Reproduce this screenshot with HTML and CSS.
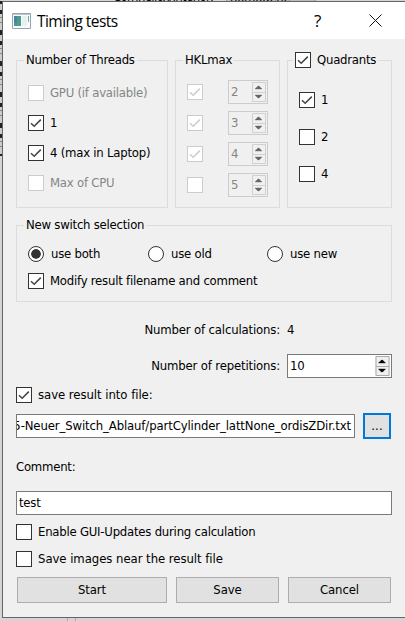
FILE: index.html
```html
<!DOCTYPE html>
<html lang="en">
<head>
<meta charset="utf-8">
<title>Timing tests</title>
<link rel="stylesheet" href="styles.css">
</head>
<body>
<svg class="symbols" width="0" height="0"><defs>
<symbol id="check" viewBox="0 0 14 14"><path d="M2 7.2 5.2 10.3 11.8 3.6" fill="none" stroke="currentColor" stroke-width="1.5"/></symbol>
<symbol id="arrows" viewBox="0 0 14 20"><path d="M.5.5h13v19H.5zM.5 10.500h13" fill="none" stroke="var(--line)"/><path d="M3 7 6 4h1L10 7zM3 13h7L7 16H6z" fill="currentColor" stroke="currentColor" stroke-width=".4"/></symbol>
</defs></svg>
<div class="backdrop">
<div class="backdrop-top"><span>Cornhellox/Interior:</span><span class="backdrop-combo">homogene</span></div>
<div class="backdrop-left"><i></i><i></i><i></i><i></i><i></i></div>
<div class="backdrop-bottom"></div>
</div>
<main class="dialog">
<header class="titlebar">
<svg class="app-icon" width="19" height="16" viewBox="0 0 19 16"><path d="M.5.5h18v15H.5z" fill="#f8fafb" stroke="#9aa5ad"/><path d="M1 1h17v1H1z" fill="#b9c5d0"/><path d="M2 3h7v10H2z" fill="#4b9c88"/><path d="M2 3h3v7H2z" fill="#4a82a4"/><path d="M10 3h5v10h-5z" fill="#e9f0f1"/><path d="M16 3h1v6h-1z" fill="#58b3a0"/></svg>
<h1>Timing tests</h1>
<span class="help">?</span>
<svg class="close" width="13" height="13" viewBox="0 0 13 13"><path d="M.5.5l12 12M12.500.5l-12 12" stroke="#111" fill="none"/></svg>
</header>
<div class="body">
<div class="groups">
<fieldset class="threads"><legend><span class="t">Number of Threads</span></legend>
<label class="off"><b class="box"></b><span class="t">GPU (if available)</span></label>
<label><b class="box"><svg><use href="#check"/></svg></b><span class="t">1</span></label>
<label><b class="box"><svg><use href="#check"/></svg></b><span class="t">4 (max in Laptop)</span></label>
<label class="off"><b class="box"></b><span class="t">Max of CPU</span></label>
</fieldset>
<fieldset class="hkl"><legend><span class="t">HKLmax</span></legend>
<div class="off"><b class="box"><svg><use href="#check"/></svg></b><span class="spin">2<svg><use href="#arrows"/></svg></span></div>
<div class="off"><b class="box"><svg><use href="#check"/></svg></b><span class="spin">3<svg><use href="#arrows"/></svg></span></div>
<div class="off"><b class="box"><svg><use href="#check"/></svg></b><span class="spin">4<svg><use href="#arrows"/></svg></span></div>
<div class="off"><b class="box"></b><span class="spin">5<svg><use href="#arrows"/></svg></span></div>
</fieldset>
<fieldset class="quadrants"><legend><b class="box"><svg><use href="#check"/></svg></b><span class="t">Quadrants</span></legend>
<label><b class="box"><svg><use href="#check"/></svg></b><span class="t">1</span></label>
<label><b class="box"></b><span class="t">2</span></label>
<label><b class="box"></b><span class="t">4</span></label>
</fieldset>
</div>
<fieldset class="switch"><legend><span class="t">New switch selection</span></legend>
<div class="radios">
<label><b class="radio on"></b><span class="t">use both</span></label>
<label><b class="radio"></b><span class="t">use old</span></label>
<label><b class="radio"></b><span class="t">use new</span></label>
</div>
<label><b class="box"><svg><use href="#check"/></svg></b><span class="t">Modify result filename and comment</span></label>
</fieldset>
<div class="field calculations"><span class="t">Number of calculations:</span><output>4</output></div>
<div class="field repetitions"><span class="t">Number of repetitions:</span><span class="spin">10<svg><use href="#arrows"/></svg></span></div>
<label class="save-result"><b class="box"><svg><use href="#check"/></svg></b><span class="t">save result into file:</span></label>
<div class="file"><div class="entry path"><span class="t">5-Neuer_Switch_Ablauf/partCylinder_lattNone_ordisZDir.txt</span></div><button class="browse">...</button></div>
<div class="comment-label"><span class="t">Comment:</span></div>
<div class="entry"><span class="t">test</span></div>
<label class="option"><b class="box"></b><span class="t">Enable GUI-Updates during calculation</span></label>
<label class="option"><b class="box"></b><span class="t">Save images near the result file</span></label>
<div class="buttons"><button>Start</button><button>Save</button><button>Cancel</button></div>
</div>
</main>
</body>
</html>
```
FILE: styles.css
```css
* { box-sizing: border-box; }
body {
  margin: 0;
  width: 405px;
  height: 621px;
  overflow: hidden;
  position: relative;
  background: #d4d4d4;
  color: #000;
  font: 13px/16px "DejaVu Sans Condensed", "DejaVu Sans", sans-serif;
  font-stretch: condensed;
  letter-spacing: -.23px;
}
.symbols { position: absolute; }
.backdrop { position: absolute; inset: 0; }
.backdrop-top {
  position: absolute;
  left: 113px;
  top: -9px;
  height: 11px;
  line-height: 12px;
  display: flex;
  gap: 2px;
}
.backdrop-top span:first-child { width: 111px; white-space: nowrap; letter-spacing: -.6px; }
.backdrop-combo { border: 1px solid #999; background: #bbb; width: 90px; padding-left: 3px; }
.backdrop-left { width: 2px; padding-top: 1px; }
.backdrop-left i { display: block; height: 31px; background: linear-gradient(#222 0 3px, #ccc 3px 9px, #222 9px 13px, #ccc 13px 16px, #888 16px 17px, #ccc 17px 21px, #888 21px 22px, #ccc 22px 29px, #222 29px); }
.backdrop-bottom { position: absolute; left: 67px; bottom: 0; width: 9px; height: 3px; border: solid #aaa; border-width: 0 1px; }
.dialog {
  position: relative;
  width: 403px;
  height: 617px;
  margin: 1px 0 0 2px;
  border: solid #666;
  border-width: 1px 0 1px 1px;
  background: #f0f0f0;
}
.titlebar {
  height: 37px;
  display: flex;
  align-items: center;
  background: #fff;
  padding-left: 9px;
}
.titlebar h1 { margin: 0 0 0 6px; width: 277px; font: 15.5px/20px "Open Sans", sans-serif; letter-spacing: -.55px; }
.help { width: 11px; font: 17px/20px "Open Sans", sans-serif; }
.close { margin-left: 44px; }
.body { padding: 12px 13px 0; }
.groups { display: grid; grid-template-columns: 152px 105px 105px; column-gap: 7px; height: 157px; }
fieldset { margin: 0; border: 1px solid #dcdcdc; min-width: 0; }
legend { margin: 0; height: 18px; padding: 0 2px; display: flex; align-items: center; gap: 6px; }
.t { white-space: nowrap; }
.off { color: #858585; }
label { display: flex; align-items: center; gap: 6px; height: 16px; }
.box {
  flex: none;
  display: block;
  width: 16px;
  height: 16px;
  border: 1px solid #333;
  background: #fff;
  color: #444;
}
.box svg { display: block; width: 14px; height: 14px; }
.off .box { border-color: #ccc; color: #ccc; }
.threads { padding: 16px 11px 0; }
.threads legend { margin-left: -4px; }
.threads label { margin-bottom: 14px; }
.hkl { padding: 11px 11px 0; }
.hkl legend { margin-left: -4px; }
.hkl div { display: flex; align-items: center; justify-content: space-between; height: 24px; margin-bottom: 7px; }
.spin {
  --line: #d0d0d0;
  display: flex;
  align-items: center;
  justify-content: space-between;
  width: 40px;
  height: 24px;
  padding: 0 1px 0 2px;
  border: 1px solid #ccc;
  color: #858585;
}
.spin svg { width: 14px; height: 20px; color: #666; }
.quadrants { padding: 23px 11px 0; }
.quadrants legend { margin-left: -6px; }
.quadrants label { margin-bottom: 21px; }
.switch { height: 86px; margin-top: 8px; padding: 12px 11px 0; }
.switch legend { margin-left: -4px; }
.radios { display: grid; grid-template-columns: 120px 119px 90px; margin-bottom: 11px; }
.radios label { gap: 7px; }
.radio { flex: none; width: 16px; height: 16px; border: 1px solid #333; border-radius: 50%; background: #fff; }
.radio.on { padding: 2px; background: #333 content-box; box-shadow: inset 0 0 0 2px #fff; }
.field { display: grid; grid-template-columns: 264px 105px; column-gap: 7px; align-items: center; }
.field .t { text-align: right; letter-spacing: -.16px; }
.calculations { margin-top: 19px; height: 18px; }
.repetitions { margin-top: 15px; height: 24px; }
.repetitions .spin { width: 105px; background: #fff; border-color: #7a7a7a; color: #000; --line: #aaa; }
.repetitions .spin svg { color: #000; width: 15px; background: #f0f0f0; }
.save-result { margin-top: 9px; }
.save-result .t { letter-spacing: -.05px; }
.file { margin-top: 10px; display: flex; justify-content: space-between; align-items: center; height: 26px; }
.entry { height: 24px; line-height: 22px; padding-left: 2px; background: #fff; border: 1px solid #7a7a7a; }
.path { width: 339px; padding: 0 3px 0 0; display: flex; justify-content: flex-end; overflow: hidden; letter-spacing: -.13px; }
button { font: inherit; letter-spacing: inherit; color: #000; height: 26px; padding: 0; border: 1px solid #adadad; background: #e1e1e1; }
.browse { width: 28px; border: 2px solid #0078d7; margin-right: 1px; letter-spacing: .2px; }
.comment-label { margin: 20px 0 16px; }
.option { margin-top: 9px; }
.option + .option { margin-top: 11px; }
.option:nth-last-child(2) .t { letter-spacing: -.05px; }
.buttons { display: grid; grid-template-columns: 150px 103px 103px; gap: 9px; margin: 10px 1px 0; letter-spacing: -.1px; }
```
